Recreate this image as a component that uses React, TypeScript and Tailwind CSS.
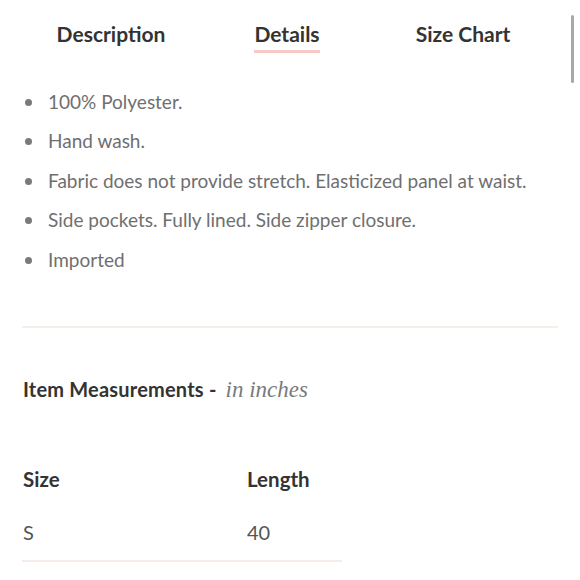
import React from 'react'

const tabs = ['Description', 'Details', 'Size Chart']

const details = [
  '100% Polyester.',
  'Hand wash.',
  'Fabric does not provide stretch. Elasticized panel at waist.',
  'Side pockets. Fully lined. Side zipper closure.',
  'Imported',
]

const App = () => {
  return (
    <div className="relative w-[580px] h-[580px] overflow-hidden bg-white font-['Lato',sans-serif]">
      {/* fake scrollbar */}
      <div className="absolute right-[6px] top-[15px] w-[3px] h-[68px] rounded-full bg-[#a8a8a8]" />

      <div className="flex px-[23px] pt-[19px]">
        {tabs.map((t) => (
          <div key={t} className="w-[176px] flex justify-center">
            <div className="flex flex-col items-center">
              <span className="text-[21px] leading-[30px] font-bold text-[#333333]">{t}</span>
              {t === 'Details' ? (
                <div className="mt-[1px] h-[3px] w-full bg-[#f4c9c6]" />
              ) : null}
            </div>
          </div>
        ))}
      </div>

      <ul className="mt-[35px] pl-[25px] flex flex-col gap-[11.5px]">
        {details.map((d) => (
          <li key={d} className="flex items-center gap-[16px] h-[28px]">
            <span className="w-[7px] h-[7px] rounded-full bg-[#7a7a7a]" />
            <span className="text-[19px] text-[#6f6f6f]">{d}</span>
          </li>
        ))}
      </ul>

      <div className="mx-[22px] mt-[52px] h-[2px] bg-[#f6eee9]" />

      <div className="mt-[46px] px-[23px] text-[20px] leading-[30px] flex items-baseline">
        <span className="font-bold text-[#333333] tracking-[0.2px]">Item Measurements -</span>
        <span className="ml-[9px] italic font-['Liberation_Serif',serif] text-[#7a7a7a] text-[23px]">in inches</span>
      </div>

      <div className="mt-[60px] px-[23px]">
        <div className="flex h-[28px] items-center text-[20.5px] font-bold text-[#333333]">
          <div className="w-[224px]">Size</div>
          <div>Length</div>
        </div>
        <div className="flex mt-[25px] h-[28px] items-center text-[20px] text-[#555555]">
          <div className="w-[224px]">S</div>
          <div>40</div>
        </div>
        <div className="mt-[14px] h-[2px] w-[320px] -ml-[1px] bg-[#f6ece8]" />
      </div>
    </div>
  )
}

export default App
